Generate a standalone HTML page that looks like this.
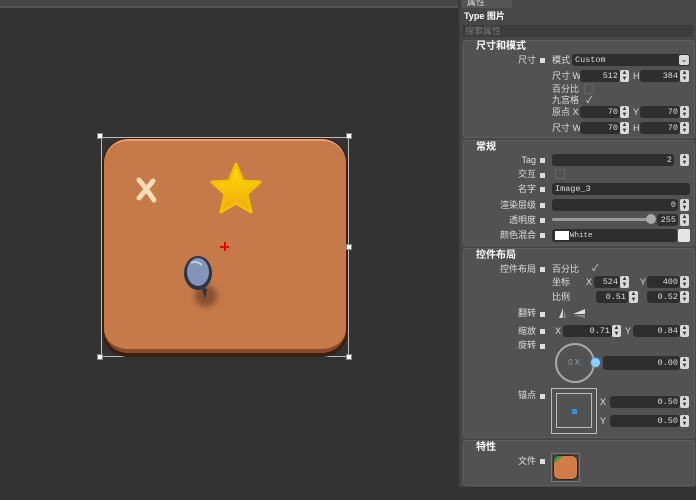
<!DOCTYPE html><html><head><meta charset="utf-8"><style>
*{margin:0;padding:0;box-sizing:border-box}
body{width:696px;height:500px;overflow:hidden;background:#333;font-family:"Liberation Sans","Noto Sans CJK SC",sans-serif;font-size:10px;color:#e6e6e6;position:relative}
.a{position:absolute}
.sec{position:absolute;left:463px;width:232px;background:#525252;border:1px solid #5e5e5e;border-radius:3px}
.h{position:absolute;font-weight:bold;font-size:10px;color:#fff;line-height:12px}
.l{position:absolute;font-size:9px;color:#ddd;white-space:nowrap;line-height:12px}
.r{text-align:right}
.sq{position:absolute;width:5px;height:5px;background:#ddd}
.in{position:absolute;height:12px;background:#2e2e2e;border-radius:3px;font-family:"Liberation Mono",monospace;font-size:8.5px;color:#ddd;line-height:12px;text-align:right;padding-right:2px}
.sp{position:absolute;width:9px;height:12px;background:#d8d8d8;border-radius:2px;color:#333;font-size:6px;line-height:6px;text-align:center}
.cb{position:absolute;width:10px;height:10px;border:1px solid #666}
.hd{position:absolute;width:6px;height:6px;background:#fff;border:1px solid #888}
</style></head><body>
<div class="a" style="left:0;top:0;width:458px;height:6px;background:#454545"></div>
<div class="a" style="left:0;top:6px;width:458px;height:2px;background:#555"></div>
<div class="a" style="left:458px;top:0;width:238px;height:500px;background:#474747;border-left:2px solid #3a3a3a"></div>
<div class="a" style="left:462px;top:0;width:50px;height:8px;background:#555"></div>
<div class="l" style="left:467px;top:-4px">属性</div>
<div class="l" style="left:464px;top:10px;font-weight:bold;color:#fff">Type 图片</div>
<div class="a" style="left:462px;top:25px;width:231px;height:12px;background:#3c3c3c;border-radius:2px"></div>
<div class="l" style="left:465px;top:25px;color:#777">搜索属性</div>
<!-- sec1 -->
<div class="sec" style="top:40px;height:98px"></div>
<div class="h" style="left:476px;top:41px">尺寸和模式</div>
<div class="l r" style="left:500px;width:36px;top:54px">尺寸</div><div class="sq" style="left:540px;top:58px"></div>
<div class="l" style="left:552px;top:54px">模式</div>
<div class="in" style="left:572px;top:54px;width:118px;text-align:left;padding-left:3px">Custom</div>
<div class="sp" style="left:679px;top:55px;width:10px;height:10px;font-size:8px;line-height:10px">⌄</div>
<div class="l" style="left:552px;top:70px">尺寸 W</div><div class="in" style="left:580px;top:70px;width:40px">512</div><div class="sp" style="left:620px;top:70px">▲<br>▼</div>
<div class="l" style="left:633px;top:70px">H</div><div class="in" style="left:640px;top:70px;width:40px">384</div><div class="sp" style="left:680px;top:70px">▲<br>▼</div>
<div class="l" style="left:552px;top:83px">百分比</div><div class="cb" style="left:584px;top:84px"></div>
<div class="l" style="left:552px;top:94px">九宫格</div><div class="l" style="left:586px;top:94px">✓</div>
<div class="l" style="left:552px;top:106px">原点 X</div><div class="in" style="left:580px;top:106px;width:40px">70</div><div class="sp" style="left:620px;top:106px">▲<br>▼</div>
<div class="l" style="left:633px;top:106px">Y</div><div class="in" style="left:640px;top:106px;width:40px">70</div><div class="sp" style="left:680px;top:106px">▲<br>▼</div>
<div class="l" style="left:552px;top:122px">尺寸 W</div><div class="in" style="left:580px;top:122px;width:40px">70</div><div class="sp" style="left:620px;top:122px">▲<br>▼</div>
<div class="l" style="left:633px;top:122px">H</div><div class="in" style="left:640px;top:122px;width:40px">70</div><div class="sp" style="left:680px;top:122px">▲<br>▼</div>
<!-- sec2 -->
<div class="sec" style="top:140px;height:106px"></div>
<div class="h" style="left:476px;top:142px">常规</div>
<div class="l r" style="left:490px;width:46px;top:154px">Tag</div><div class="sq" style="left:540px;top:158px"></div>
<div class="in" style="left:552px;top:154px;width:122px">2</div><div class="sp" style="left:680px;top:154px">▲<br>▼</div>
<div class="l r" style="left:490px;width:46px;top:168px">交互</div><div class="sq" style="left:540px;top:173px"></div><div class="cb" style="left:555px;top:169px"></div>
<div class="l r" style="left:490px;width:46px;top:183px">名字</div><div class="sq" style="left:540px;top:187px"></div>
<div class="in" style="left:552px;top:183px;width:138px;text-align:left;padding-left:3px">Image_3</div>
<div class="l r" style="left:490px;width:46px;top:199px">渲染层级</div><div class="sq" style="left:540px;top:203px"></div>
<div class="in" style="left:552px;top:199px;width:126px">0</div><div class="sp" style="left:680px;top:199px">▲<br>▼</div>
<div class="l r" style="left:490px;width:46px;top:214px">透明度</div><div class="sq" style="left:540px;top:218px"></div>
<div class="a" style="left:552px;top:218px;width:98px;height:3px;background:#999;border-radius:2px"></div>
<div class="a" style="left:646px;top:214px;width:10px;height:10px;background:#aaa;border-radius:50%"></div>
<div class="in" style="left:657px;top:214px;width:21px">255</div><div class="sp" style="left:680px;top:214px">▲<br>▼</div>
<div class="l r" style="left:490px;width:46px;top:229px">颜色混合</div><div class="sq" style="left:540px;top:233px"></div>
<div class="in" style="left:552px;top:229px;width:125px;height:13px;line-height:14px;text-align:left;padding-left:18px;font-size:7.5px">White</div>
<div class="a" style="left:555px;top:231px;width:14px;height:9px;background:#fff"></div>
<div class="a" style="left:678px;top:229px;width:12px;height:13px;background:#e6e6e6;border-radius:2px"></div>
<!-- sec3 -->
<div class="sec" style="top:248px;height:190px"></div>
<div class="h" style="left:476px;top:250px">控件布局</div>
<div class="l r" style="left:490px;width:46px;top:263px">控件布局</div><div class="sq" style="left:540px;top:267px"></div>
<div class="l" style="left:552px;top:263px">百分比</div><div class="l" style="left:592px;top:262px">✓</div>
<div class="l" style="left:552px;top:276px">坐标</div><div class="l" style="left:586px;top:276px">X</div>
<div class="in" style="left:594px;top:276px;width:26px">524</div><div class="sp" style="left:620px;top:276px">▲<br>▼</div>
<div class="l" style="left:640px;top:276px">Y</div><div class="in" style="left:647px;top:276px;width:33px">400</div><div class="sp" style="left:680px;top:276px">▲<br>▼</div>
<div class="l" style="left:552px;top:291px">比例</div>
<div class="in" style="left:596px;top:291px;width:32px">0.51</div><div class="sp" style="left:629px;top:291px">▲<br>▼</div>
<div class="in" style="left:647px;top:291px;width:33px">0.52</div><div class="sp" style="left:680px;top:291px">▲<br>▼</div>
<div class="l r" style="left:490px;width:46px;top:307px">翻转</div><div class="sq" style="left:540px;top:312px"></div>
<svg class="a" style="left:554px;top:306px" width="34" height="14"><path d="M5 12 L9 2 L9 12Z" fill="#ccc"/><path d="M10 12 L10 3 L12 12Z" fill="#888"/><path d="M19 8 L31 3 L31 8Z" fill="#ddd"/><path d="M19 9 L31 9 L31 12Z" fill="#888"/></svg>
<div class="l r" style="left:490px;width:46px;top:325px">缩放</div><div class="sq" style="left:540px;top:329px"></div>
<div class="l" style="left:555px;top:325px">X</div><div class="in" style="left:563px;top:325px;width:49px">0.71</div><div class="sp" style="left:612px;top:325px">▲<br>▼</div>
<div class="l" style="left:625px;top:325px">Y</div><div class="in" style="left:633px;top:325px;width:47px">0.84</div><div class="sp" style="left:680px;top:325px">▲<br>▼</div>
<div class="l r" style="left:490px;width:46px;top:339px">旋转</div><div class="sq" style="left:540px;top:344px"></div>
<div class="a" style="left:555px;top:343px;width:40px;height:40px;border:2px solid #aaa;border-radius:50%"></div>
<div class="l" style="left:568px;top:357px;color:#999;font-size:8px">0 X</div>
<div class="a" style="left:591px;top:358px;width:9px;height:9px;background:#8cd0ff;border-radius:50%;box-shadow:0 0 3px #4af"></div>
<div class="in" style="left:603px;top:356px;width:77px;height:14px;line-height:14px">0.00</div><div class="sp" style="left:680px;top:357px">▲<br>▼</div>
<div class="l r" style="left:490px;width:46px;top:389px">锚点</div><div class="sq" style="left:540px;top:394px"></div>
<div class="a" style="left:551px;top:388px;width:46px;height:46px;border:1px solid #bbb"></div>
<div class="a" style="left:556px;top:393px;width:36px;height:35px;border:1px solid #bbb"></div>
<div class="a" style="left:572px;top:409px;width:5px;height:5px;background:#3a8de0"></div>
<div class="l" style="left:600px;top:396px">X</div><div class="in" style="left:610px;top:396px;width:70px">0.50</div><div class="sp" style="left:680px;top:396px">▲<br>▼</div>
<div class="l" style="left:600px;top:415px">Y</div><div class="in" style="left:610px;top:415px;width:70px">0.50</div><div class="sp" style="left:680px;top:415px">▲<br>▼</div>
<!-- sec4 -->
<div class="sec" style="top:440px;height:46px"></div>
<div class="h" style="left:476px;top:442px">特性</div>
<div class="l r" style="left:490px;width:46px;top:455px">文件</div><div class="sq" style="left:540px;top:459px"></div>
<div class="a" style="left:551px;top:453px;width:29px;height:29px;border:1px solid #777;background:#444"></div>
<div class="a" style="left:553px;top:455px;width:25px;height:25px;background:#d07c48;border:1px solid #3a2418;border-radius:6px;overflow:hidden"><div style="position:absolute;left:-4px;top:-3px;width:16px;height:6px;background:#2e9a4a;transform:rotate(-40deg)"></div></div>
<div class="a" style="left:458px;top:487px;width:238px;height:13px;background:#333"></div>
<!-- canvas -->
<div class="a" style="left:101px;top:137px;width:248px;height:220px;border:1px solid #bbb"></div>
<div class="a" style="left:102px;top:138px;width:246px;height:219px;background:#3a2014;border-radius:26px"></div>
<div class="a" style="left:104px;top:139px;width:242px;height:214px;background:#c67a4a;border-radius:24px;border-top:2px solid #e3a070;border-bottom:4px solid #8a4a28"></div>
<svg class="a" style="left:134px;top:176px" width="26" height="28"><path d="M5 4 Q12 12 20 24 M19 5 Q12 14 5 22" stroke="#f7dcb8" stroke-width="5" fill="none" stroke-linecap="round"/></svg>
<svg class="a" style="left:210px;top:162px" width="52" height="56"><defs><linearGradient id="g" x1="0" y1="0" x2="0" y2="1"><stop offset="0" stop-color="#ffe000"/><stop offset="1" stop-color="#f0a810"/></linearGradient></defs><path d="M26 2 L33 19 L50 20 L37 32 L41 50 L26 41 L11 50 L15 32 L2 20 L19 19Z" fill="url(#g)" stroke="#f5c000" stroke-width="3" stroke-linejoin="round"/></svg>
<div class="a" style="left:195px;top:285px;width:22px;height:22px;background:rgba(60,30,10,.45);border-radius:50%;filter:blur(3px)"></div>
<svg class="a" style="left:182px;top:255px" width="36" height="46"><path d="M20 33 L23 44 L25 34Z" fill="#2c3346"/><ellipse cx="16" cy="18" rx="14" ry="17" fill="#2d3448"/><ellipse cx="16" cy="17" rx="11" ry="14" fill="#8494b8"/><path d="M9 8 Q14 5 20 10" stroke="#c2ccdf" stroke-width="2" fill="none"/></svg>
<div class="a" style="left:220px;top:246px;width:9px;height:2px;background:#e00"></div>
<div class="a" style="left:224px;top:242px;width:2px;height:9px;background:#e00"></div>
<div class="hd" style="left:97px;top:133px"></div><div class="hd" style="left:346px;top:133px"></div>
<div class="hd" style="left:346px;top:244px"></div>
<div class="hd" style="left:97px;top:354px"></div><div class="hd" style="left:346px;top:354px"></div>
</body></html>
